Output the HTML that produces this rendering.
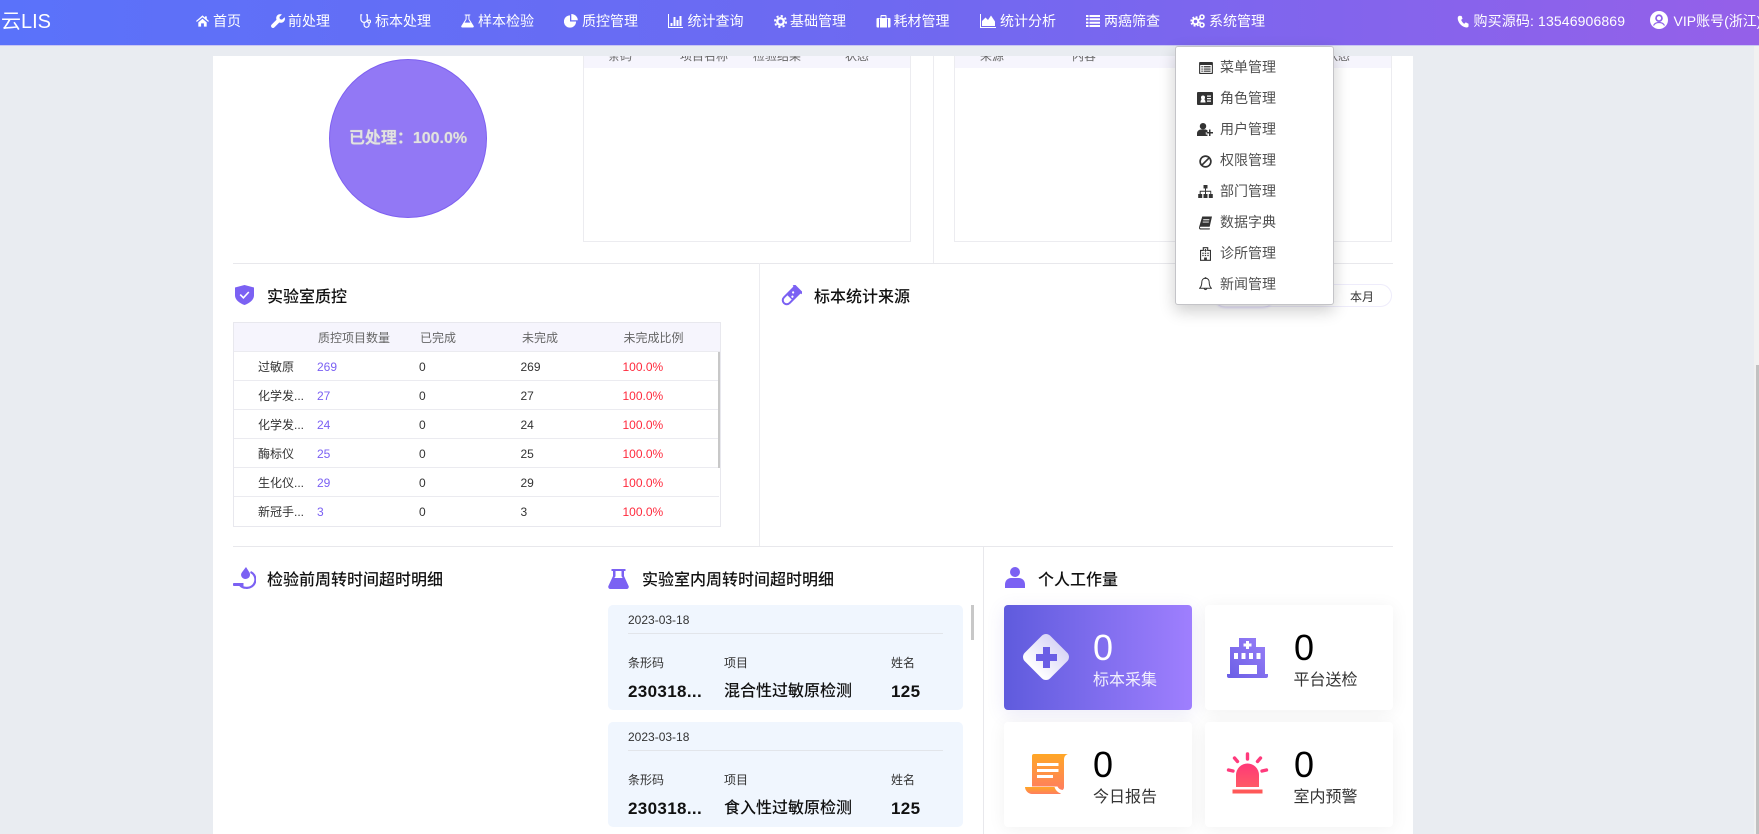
<!DOCTYPE html>
<html lang="zh-CN">
<head>
<meta charset="utf-8">
<title>云LIS</title>
<style>
html,body{margin:0;padding:0;width:1759px;height:834px;overflow:hidden;background:#e9ecf1}
body{position:relative;font-family:"Liberation Sans","Noto Sans CJK SC",sans-serif;color:#333}
div,span,svg{box-sizing:border-box}
.a,.t,svg{position:absolute}
.t{white-space:nowrap}
#hd{position:absolute;left:0;top:0;width:1759px;height:46px;background:linear-gradient(90deg,#5a72fa 0%,#6e69f1 50%,#9560e9 100%);border-bottom:1px solid #c9c6f3;z-index:5;overflow:hidden}
#hd .t{color:#fff;font-size:14px;line-height:20px;top:11px}
#hd svg{fill:#fff}
#panel{position:absolute;left:213px;top:56px;width:1200px;height:778px;background:#fff;overflow:hidden}
.hl{position:absolute;background:#e8e8ec;height:1px}
.vl{position:absolute;background:#ececf0;width:1px}
.box{position:absolute;border:1px solid #ececf0;background:#fff;overflow:hidden}
.strip{position:absolute;left:0;right:0;top:-1px;height:12px;background:#f6f5fd}
.title{position:absolute;font-size:16px;line-height:22px;color:#111;font-weight:500;white-space:nowrap}
.th{position:absolute;font-size:12px;line-height:16px;color:#666;white-space:nowrap}
.r{position:absolute;left:0;width:485px;height:29px;border-bottom:1px solid #ebebf0;font-size:12px;line-height:30px;color:#333}
.r span{position:absolute;top:0;white-space:nowrap}
.r .p{color:#7b61f3}
.r .e{color:#ff2a3d}
.card{position:absolute;width:355px;height:105px;background:#f0f6fe;border-radius:5px;font-size:12px;color:#333}
.card .t{line-height:16px}
.card .v{font-size:16px;line-height:22px;font-weight:700;color:#111;top:76px}
.card .s{font-size:17px;letter-spacing:.35px}
.w{position:absolute;width:188px;height:105px;background:#fff;border-radius:4px;box-shadow:0 2px 18px rgba(0,0,0,.06)}
.w .n{position:absolute;font-size:36px;line-height:40px;color:#000;left:89px;top:23px}
.w .l{position:absolute;font-size:16px;line-height:22px;color:#333;left:89px;top:65px;white-space:nowrap}
#menu{position:absolute;left:1175px;top:46px;width:159px;height:259px;background:#fff;border:1px solid #c4c4c8;border-radius:3px;box-shadow:0 6px 16px rgba(0,0,0,.2);z-index:6}
#menu .t{left:44px;font-size:14px;line-height:20px;color:#505050}
#menu svg{fill:#333;left:22px}
</style>
</head>
<body>

<div id="panel">
  <!-- donut -->
  <div class="a" style="left:116px;top:3px;width:158px;height:159px;border-radius:50%;background:#9278f5;border:1.5px solid #7e60f0"></div>
  <div class="t" style="left:115.500px;top:72px;width:159px;text-align:center;font-size:16px;line-height:22px;font-weight:700;color:#e2e2e2;text-shadow:0 0 1px #bbb">已处理：100.0%</div>

  <!-- top tables -->
  <div class="box" style="left:370px;top:-10px;width:328px;height:196px">
    <div class="strip" style="height:22px"></div>
    <div class="th" style="left:24px;top:1px">条码</div>
    <div class="th" style="left:96px;top:1px">项目名称</div>
    <div class="th" style="left:169px;top:1px">检验结果</div>
    <div class="th" style="left:261px;top:1px">状态</div>
  </div>
  <div class="a" style="left:0;top:-10px;width:1200px;height:10px;background:#e9ecf1"></div>
  <div class="box" style="left:741px;top:-10px;width:438px;height:196px">
    <div class="strip" style="height:22px"></div>
    <div class="th" style="left:25px;top:1px">来源</div>
    <div class="th" style="left:117px;top:1px">内容</div>
    <div class="th" style="left:371px;top:1px">状态</div>
  </div>
  <div class="vl" style="left:720px;top:0;height:207px"></div>
  <div class="hl" style="left:20px;top:207px;width:1160px"></div>

  <!-- QC -->
  <svg style="left:21.500px;top:229px;width:19px;height:20px" viewBox="0 0 19 20"><path fill="#7b61f3" d="M9.500 0L19 2.500V10.500C19 15 14 18.500 9.500 20 5 18.500 0 15 0 10.500V2.500z"/><path fill="none" stroke="#fff" stroke-width="1.600" d="M5.200 9.600l3.200 3.200 5.400-5.800"/></svg>
  <div class="title" style="left:54px;top:231px">实验室质控</div>

  <div class="a" style="left:20px;top:266px;width:488px;height:205px;border:1px solid #e8e8ee;overflow:hidden">
    <div class="a" style="left:0;top:0;width:486px;height:29px;background:#f6f5fd;border-bottom:1px solid #ebebf0"></div>
    <div class="th" style="left:84px;top:7px">质控项目数量</div>
    <div class="th" style="left:186px;top:7px">已完成</div>
    <div class="th" style="left:288px;top:7px">未完成</div>
    <div class="th" style="left:389.500px;top:7px">未完成比例</div>
    <div class="r" style="top:29px"><span style="left:24px">过敏原</span><span class="p" style="left:83px">269</span><span style="left:185px">0</span><span style="left:286.500px">269</span><span class="e" style="left:388.500px">100.0%</span></div>
    <div class="r" style="top:58px"><span style="left:24px">化学发...</span><span class="p" style="left:83px">27</span><span style="left:185px">0</span><span style="left:286.500px">27</span><span class="e" style="left:388.500px">100.0%</span></div>
    <div class="r" style="top:87px"><span style="left:24px">化学发...</span><span class="p" style="left:83px">24</span><span style="left:185px">0</span><span style="left:286.500px">24</span><span class="e" style="left:388.500px">100.0%</span></div>
    <div class="r" style="top:116px"><span style="left:24px">酶标仪</span><span class="p" style="left:83px">25</span><span style="left:185px">0</span><span style="left:286.500px">25</span><span class="e" style="left:388.500px">100.0%</span></div>
    <div class="r" style="top:145px"><span style="left:24px">生化仪...</span><span class="p" style="left:83px">29</span><span style="left:185px">0</span><span style="left:286.500px">29</span><span class="e" style="left:388.500px">100.0%</span></div>
    <div class="r" style="top:174px;border-bottom:0"><span style="left:24px">新冠手...</span><span class="p" style="left:83px">3</span><span style="left:185px">0</span><span style="left:286.500px">3</span><span class="e" style="left:388.500px">100.0%</span></div>
    <div class="a" style="left:484px;top:29px;width:3px;height:116px;background:#c8c8c8"></div>
  </div>

  <!-- specimen -->
  <div class="vl" style="left:546px;top:207px;height:283px"></div>
  <svg style="left:567px;top:229px;width:22px;height:22px" viewBox="0 0 22 22"><g transform="rotate(45 11 11)"><path fill="none" stroke="#7b61f3" stroke-width="2" d="M7 2.500V17a4 4 0 0 0 8 0V2.500"/><path fill="#7b61f3" d="M5 0h12v2.600H5z M7 2h8v11H7z"/><circle cx="10" cy="7" r="1.100" fill="#fff"/><circle cx="12.500" cy="10.500" r="1.100" fill="#fff"/></g></svg>
  <div class="title" style="left:601px;top:231px">标本统计来源</div>
  <div class="a" style="left:1000px;top:228px;width:179px;height:23px;border:1px solid #eeecfb;border-radius:12px;background:#fff">
    <div class="a" style="left:0;top:-1px;width:60px;height:23px;border-radius:12px;box-shadow:0 1px 2px rgba(123,97,243,.22)"></div>
    <div class="t" style="left:136px;top:3px;font-size:12px;line-height:18px;color:#333">本月</div>
  </div>
  <div class="hl" style="left:20px;top:490px;width:1160px"></div>

  <!-- turnaround -->
  <svg style="left:20px;top:511px;width:23px;height:22px" viewBox="0 0 23 22"><path fill="#7b61f3" d="M13 0l3.500 5.500c1 2 .5 4.500-1.500 5.800-2.300 1.400-5.300.6-6.500-1.700-.8-1.500-.5-3 .5-4.300z"/><path fill="none" stroke="#7b61f3" stroke-width="2.200" d="M17.500 5a8.300 8.300 0 0 1-4.500 15.800c-2.600 0-4.900-1.200-6.300-3"/><path fill="#7b61f3" d="M1.200 16h9.300v3H1.200a1.500 1.500 0 0 1 0-3z"/></svg>
  <div class="title" style="left:54px;top:514px">检验前周转时间超时明细</div>

  <svg style="left:395px;top:513px;width:21px;height:20px" viewBox="0 0 21 20"><path fill="#7b61f3" d="M3.500 0h14v2H16v5l4.600 10c.6 1.400-.4 3-1.900 3H2.300C.8 20-.2 18.400.4 17L5 7V2H3.500z M7.500 2v5.300L6.300 9h8.400L13.500 7.300V2z" fill-rule="evenodd"/></svg>
  <div class="title" style="left:429px;top:514px">实验室内周转时间超时明细</div>

  <div class="card" style="left:395px;top:549px">
    <div class="t" style="left:20px;top:7px">2023-03-18</div>
    <div class="a" style="left:20px;top:28px;width:315px;height:1px;background:#e2e5ea"></div>
    <div class="t" style="left:20px;top:50px">条形码</div>
    <div class="t" style="left:116px;top:50px">项目</div>
    <div class="t" style="left:283px;top:50px">姓名</div>
    <div class="t v s" style="left:20px">230318...</div>
    <div class="t v" style="left:116px;font-weight:500">混合性过敏原检测</div>
    <div class="t v s" style="left:283px">125</div>
  </div>
  <div class="card" style="left:395px;top:666px">
    <div class="t" style="left:20px;top:7px">2023-03-18</div>
    <div class="a" style="left:20px;top:28px;width:315px;height:1px;background:#e2e5ea"></div>
    <div class="t" style="left:20px;top:50px">条形码</div>
    <div class="t" style="left:116px;top:50px">项目</div>
    <div class="t" style="left:283px;top:50px">姓名</div>
    <div class="t v s" style="left:20px">230318...</div>
    <div class="t v" style="left:116px;font-weight:500">食入性过敏原检测</div>
    <div class="t v s" style="left:283px">125</div>
  </div>
  <div class="a" style="left:758px;top:549px;width:2.500px;height:35px;background:#c8c8c8"></div>

  <!-- workload -->
  <div class="vl" style="left:770px;top:490px;height:288px;background:#e8e8ec"></div>
  <svg style="left:792px;top:511px;width:20px;height:21px" viewBox="0 0 20 21"><circle cx="10" cy="5" r="5" fill="#7b61f3"/><path fill="#7b61f3" d="M0 21v-3.500C0 13.500 3 11 6 11h8c3 0 6 2.500 6 6.500V21z"/></svg>
  <div class="title" style="left:825px;top:514px">个人工作量</div>

  <div class="w" style="left:791px;top:549px;background:linear-gradient(90deg,#5f5bdd,#9f7ffe);box-shadow:0 4px 18px rgba(90,80,200,.12)">
    <div class="a" style="left:24px;top:34px;width:36px;height:36px;border-radius:6px;transform:rotate(45deg);background:linear-gradient(0deg,#fff,#d9d6f6)"></div>
    <div class="a" style="left:32px;top:42px;width:21px;height:21px;background:linear-gradient(#6a5ee5,#6a5ee5) center/7px 21px no-repeat,linear-gradient(#6a5ee5,#6a5ee5) center/21px 7px no-repeat"></div>
    <div class="n" style="color:#fff">0</div>
    <div class="l" style="color:#f1effd">标本采集</div>
  </div>
  <div class="w" style="left:992px;top:549px">
    <svg style="left:22px;top:33px;width:41px;height:40px" viewBox="0 0 41 40"><defs><linearGradient id="g1" x1="0" y1="1" x2="1" y2="0"><stop offset="0" stop-color="#6a5ee5"/><stop offset="1" stop-color="#9a80f8"/></linearGradient></defs><path fill="url(#g1)" d="M12 0h17v9h9v27h3v2a2 2 0 0 1-2 2H2a2 2 0 0 1-2-2v-2h3V9h9z"/><path fill="#fff" d="M19 3h3v2.500h2.500v3H22V11h-3V8.500h-2.500v-3H19z M7 15h4v6H7z M14.500 15h4v6h-4z M22 15h4v6h-4z M29.500 15h4v6h-4z M12 27h18v9H12z"/></svg>
    <div class="n">0</div>
    <div class="l" style="left:88.500px">平台送检</div>
  </div>
  <div class="w" style="left:791px;top:666px">
    <svg style="left:21px;top:32px;width:43px;height:40px" viewBox="0 0 43 40"><defs><linearGradient id="g2" x1="0" y1="0" x2="0" y2="1"><stop offset="0" stop-color="#ffa726"/><stop offset="1" stop-color="#ff7e5f"/></linearGradient></defs><path fill="url(#g2)" d="M7 2a2 2 0 0 1 2-2h34c-3 1-4 3-4 6v27c0 1.500-.5 2.500-1.500 3-2.500-.5-4-1.500-5-3.500H7z"/><path fill="url(#g2)" d="M0 33h29.500c1 3 3 5.500 6.500 6.500l-1 .5H7c-3.500 0-7-3.500-7-7z"/><path fill="#fff" d="M12 9h21.500v3H12z M12 15h21.500v3H12z M12 21h16v3H12z"/></svg>
    <div class="n">0</div>
    <div class="l">今日报告</div>
  </div>
  <div class="w" style="left:992px;top:666px">
    <svg style="left:21px;top:30px;width:43px;height:42px" viewBox="0 0 43 42"><defs><linearGradient id="g3" x1="0" y1="0" x2="0" y2="1"><stop offset="0" stop-color="#ff3878"/><stop offset="1" stop-color="#ff5a66"/></linearGradient></defs><path fill="url(#g3)" d="M10 35V23a11.500 11.500 0 0 1 23 0v12z"/><path fill="#ff5858" d="M6.500 37.500H36.500V41.500H6.500z"/><g stroke="#ff3a7c" stroke-width="3.400" stroke-linecap="round"><path d="M21.500 2v5M8.500 6l3 3.500M34.500 6l-3 3.500M2.500 18l4.500 1M40.500 18l-4.500 1"/></g></svg>
    <div class="n">0</div>
    <div class="l" style="left:88.500px">室内预警</div>
  </div>
</div>

<!-- page scrollbar -->
<div class="a" style="left:1754px;top:46px;width:5px;height:788px;background:#f1f1f1"></div>
<div class="a" style="left:1756px;top:365px;width:3px;height:469px;background:#c1c1c1"></div>

<!-- header -->
<div id="hd">
  <div class="t" style="left:1px;top:10px;font-size:20px;line-height:24px">云LIS</div>

  <svg style="left:196px;top:15px;width:13px;height:12px" viewBox="0 0 14 12"><path d="M7 0L0 6l.9 1L7 1.900 13.100 7l.9-1-2.400-2.100V1h-2v1.200z M2.500 7.500L7 3.600l4.500 3.900V12H8.500V8.500h-3V12h-3z"/></svg>
  <div class="t" style="left:213px">首页</div>

  <svg style="left:271px;top:14px;width:14px;height:14px" viewBox="0 0 14 14"><path d="M13.600 3.200L11 5.600 8.900 5.100 8.400 3 10.900.5C9.400-.2 7.600.1 6.400 1.300 5.200 2.500 4.900 4.200 5.500 5.700L.6 10.600c-.8.8-.8 2 0 2.800s2 .8 2.800 0l4.900-4.900c1.500.6 3.300.3 4.500-.9 1.200-1.200 1.500-3 .8-4.400z"/></svg>
  <div class="t" style="left:288px">前处理</div>

  <svg style="left:360px;top:14px;width:12px;height:14px" viewBox="0 0 12 14"><path fill="none" stroke="#fff" stroke-width="1.200" d="M2.200.8H.9v4.400a3.200 3.200 0 0 0 6.400 0V.8H6 M4.100 8.500v2.300a2.500 2.500 0 0 0 5 0V9"/><circle cx="9.100" cy="7.500" r="1.400" fill="none" stroke="#fff" stroke-width="1.100"/></svg>
  <div class="t" style="left:375px">标本处理</div>

  <svg style="left:461px;top:14px;width:13px;height:14px" viewBox="0 0 14 14"><path fill-rule="evenodd" d="M4 0h6v1H9v4l4.600 7.300c.5.800 0 1.700-.9 1.700H1.300c-.9 0-1.400-.9-.9-1.700L5 5V1H4z M6 1.200v4.100L3.900 8.800h6.200L8 5.300V1.200z"/></svg>
  <div class="t" style="left:478px">样本检验</div>

  <svg style="left:564px;top:14px;width:14px;height:14px" viewBox="0 0 14 14"><path d="M6 1.400A6.100 6.100 0 1 0 12.100 7.500H6z M7.300 0A6.500 6.500 0 0 1 13.800 6.200H7.300z"/></svg>
  <div class="t" style="left:582px">质控管理</div>

  <svg style="left:668px;top:14px;width:15px;height:14px" viewBox="0 0 15 14"><path d="M0 0h1v13h14v1H0z M2.500 9h2v3h-2z M5.500 3h2v9h-2z M8.500 6h2v6h-2z M11.500 2h2v10h-2z"/></svg>
  <div class="t" style="left:687.500px">统计查询</div>

  <svg style="left:774px;top:14.500px;width:13px;height:13px" viewBox="0 0 14 14"><circle cx="7" cy="7" r="6" fill="none" stroke="#fff" stroke-width="2" stroke-dasharray="2.400 2.310"/><circle cx="7" cy="7" r="3.500" fill="none" stroke="#fff" stroke-width="2.600"/></svg>
  <div class="t" style="left:790px">基础管理</div>

  <svg style="left:876px;top:14px;width:15px;height:14px" viewBox="0 0 14 14"><path fill-rule="evenodd" d="M5 1h4a1 1 0 0 1 1 1v2h3a1 1 0 0 1 1 1v7.500a1 1 0 0 1-1 1H1a1 1 0 0 1-1-1V5a1 1 0 0 1 1-1h3V2a1 1 0 0 1 1-1z M5 2.200V4h4V2.200z M2.500 4.500v9h1v-9z M10.500 4.500v9h1v-9z"/></svg>
  <div class="t" style="left:893.500px">耗材管理</div>

  <svg style="left:980px;top:14px;width:16px;height:14px" viewBox="0 0 16 14"><path d="M0 0h1v13h15v1H0z M2 12V7l3.500-3.500L8 6l3-4.500L15 7.500V12z"/></svg>
  <div class="t" style="left:1000px">统计分析</div>

  <svg style="left:1086px;top:15px;width:14px;height:12px" viewBox="0 0 14 12"><path d="M0 0h2.500v2H0z M3.500 0H14v2H3.500z M0 3.300h2.500v2H0z M3.500 3.300H14v2H3.500z M0 6.700h2.500v2H0z M3.500 6.700H14v2H3.500z M0 10h2.500v2H0z M3.500 10H14v2H3.500z"/></svg>
  <div class="t" style="left:1104px">两癌筛查</div>

  <svg style="left:1190px;top:14px;width:15px;height:14px" viewBox="0 0 15 14"><circle cx="5.500" cy="7.500" r="4.300" fill="none" stroke="#fff" stroke-width="1.800" stroke-dasharray="1.900 1.480"/><circle cx="5.500" cy="7.500" r="2.700" fill="none" stroke="#fff" stroke-width="2"/><circle cx="12" cy="3" r="2" fill="none" stroke="#fff" stroke-width="1.600"/><circle cx="12" cy="11" r="2" fill="none" stroke="#fff" stroke-width="1.600"/></svg>
  <div class="t" style="left:1209px">系统管理</div>

  <svg style="left:1457px;top:15px;width:12px;height:13px" viewBox="0 0 13 13"><path d="M3 .3l2 .2 1 3-1.500 1.200c.5 1.500 2 3.500 3.300 4.300L9.500 7.500l3 1.500v2.500c0 1-1 1.500-2 1.500C5 12.800.5 7 .8 2.500.9 1 2 .3 3 .3z"/></svg>
  <div class="t" style="left:1473.500px;letter-spacing:.13px">购买源码: 13546906869</div>

  <svg style="left:1650px;top:11px;width:18px;height:18px" viewBox="0 0 18 18"><circle cx="9" cy="9" r="9"/><circle cx="9" cy="7.200" r="3.800" fill="#8f60ea"/><circle cx="9" cy="7.200" r="2.100" fill="#fff"/><path fill="none" stroke="#8f60ea" stroke-width="1.200" d="M3.500 14.500c1-2 3-3 5.500-3s4.500 1 5.500 3"/></svg>
  <div class="t" style="left:1673.500px">VIP账号(浙江)</div>
</div>

<!-- dropdown -->
<div id="menu">
  <svg style="top:14.500px;left:22.500px;width:14px;height:12px" viewBox="0 0 15 13"><path fill-rule="evenodd" d="M1 0h13a1 1 0 0 1 1 1v11a1 1 0 0 1-1 1H1a1 1 0 0 1-1-1V1a1 1 0 0 1 1-1z M1.200 3.200v8.600h12.600V3.200z"/><path d="M2.500 4.500h1.500v1.300H2.500z M5 4.500h7.500v1.300H5z M2.500 7h1.500v1.300H2.500z M5 7h7.500v1.300H5z M2.500 9.300h1.500v1.300H2.500z M5 9.300h7.500v1.300H5z"/></svg>
  <div class="t" style="top:10px">菜单管理</div>

  <svg style="top:45px;left:21px;width:16px;height:13px" viewBox="0 0 16 13"><path fill-rule="evenodd" d="M1 0h14a1 1 0 0 1 1 1v11a1 1 0 0 1-1 1H1a1 1 0 0 1-1-1V1a1 1 0 0 1 1-1z M3.500 10.500h5c0-1.800-.6-3-1.200-3.300 .5-.5.700-1 .7-1.700A2 2 0 0 0 4 5.500c0 .7.200 1.200.7 1.700-.6.300-1.200 1.500-1.200 3.300z M10 3.500v1.200h4V3.500z M10 6v1.200h4V6z M10 8.500v1.200h4V8.500z"/></svg>
  <div class="t" style="top:41px">角色管理</div>

  <svg style="top:76px;left:21px;width:16px;height:13px" viewBox="0 0 16 13"><circle cx="6" cy="3.200" r="3.200"/><path d="M0 13v-2.500C0 8 2 6.500 4 6.500h4c1 0 1.800.3 2.500.9V9H8.800v2.500h1.700V13z"/><path d="M12 6.500h1.500V9H16v1.500h-2.500V13H12v-2.500H9.500V9H12z"/></svg>
  <div class="t" style="top:72px">用户管理</div>

  <svg style="top:107.500px;left:22.500px;width:13px;height:13px" viewBox="0 0 14 14"><circle cx="7" cy="7" r="5.800" fill="none" stroke="#333" stroke-width="1.800"/><path stroke="#333" stroke-width="1.800" d="M3 11L11 3"/></svg>
  <div class="t" style="top:103px">权限管理</div>

  <svg style="top:138px;width:15px;height:13px" viewBox="0 0 15 13"><path d="M5.500 0h4v3.500H8v2.300h5.200V9H14.800v4h-4V9h1.500V6.800H8V9h1.500v4h-4V9H7V6.800H2.700V9h1.500v4h-4V9h1.500V5.800H7V3.500H5.500z"/></svg>
  <div class="t" style="top:134px">部门管理</div>

  <svg style="top:169px;left:23px;width:13px;height:14px" viewBox="0 0 14 14"><path fill-rule="evenodd" d="M3.500 0H14l-2.500 11H2c-.6 0-1 .3-1 .9s.4.900 1 .900h9.800L11.500 14H1.500C.6 14 0 13.300 0 12.300c0-.4.100-.8.200-1.200z M4.500 3v1h6.500l.2-1z M4 5.500v1h6.500l.2-1z"/></svg>
  <div class="t" style="top:165px">数据字典</div>

  <svg style="top:200px;left:23.500px;width:11px;height:14px" viewBox="0 0 12 15"><path fill-rule="evenodd" d="M3 0h6v3h3v12H0V3h3z M4.200 1.200v3H1.200v9.600h3.300v-2.500h3v2.500h3.300V4.200h-3v-3z"/><path d="M5.500 2h1v1h1v1h-1v1h-1V4h-1V3h1z M2.500 6h1.500v1.300H2.500z M5.200 6h1.500v1.300H5.200z M8 6h1.500v1.300H8z M2.500 8.500h1.500v1.300H2.500z M5.200 8.500h1.500v1.300H5.200z M8 8.500h1.500v1.300H8z"/></svg>
  <div class="t" style="top:196px">诊所管理</div>

  <svg style="top:230px;left:22.500px;width:13px;height:15px" viewBox="0 0 14 16"><path fill="none" stroke="#333" stroke-width="1.100" d="M7 1.200c-2.700 0-4 2-4 4.500 0 3.200-1 5-2.300 6.300h12.600C12 10.700 11 8.900 11 5.700c0-2.500-1.300-4.500-4-4.500z M5.600 12.500a1.500 1.500 0 0 0 2.800 0"/><circle cx="7" cy="1" r="1"/></svg>
  <div class="t" style="top:227px">新闻管理</div>
</div>

</body>
</html>
